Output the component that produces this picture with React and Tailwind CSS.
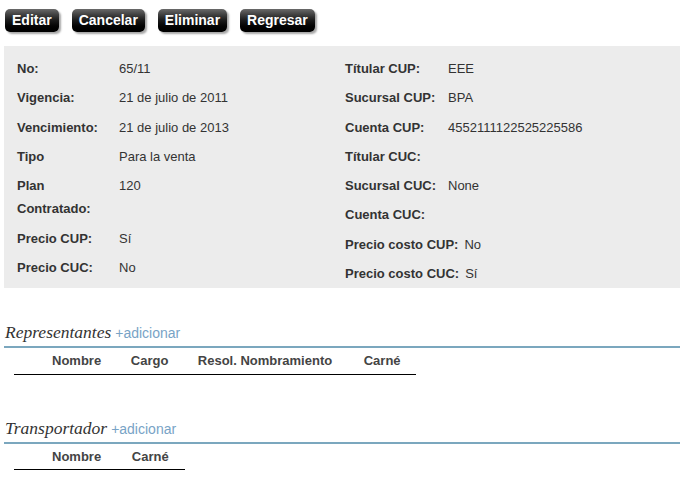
import React from 'react';

const left = [
  ['No:', '65/11'],
  ['Vigencia:', '21 de julio de 2011'],
  ['Vencimiento:', '21 de julio de 2013'],
  ['Tipo', 'Para la venta'],
  ['Plan Contratado:', '120'],
  ['Precio CUP:', 'Sí'],
  ['Precio CUC:', 'No'],
];

const right = [
  ['Títular CUP:', 'EEE'],
  ['Sucursal CUP:', 'BPA'],
  ['Cuenta CUP:', '4552111122525225586'],
  ['Títular CUC:', ''],
  ['Sucursal CUC:', 'None'],
  ['Cuenta CUC:', ''],
  ['Precio costo CUP:', 'No'],
  ['Precio costo CUC:', 'Sí'],
];

const Boton = ({ children }) => (
  <button className="h-[23px] px-[7px] rounded-[5px] bg-gradient-to-b from-[#6a6a6a] via-[#1a1a1a] to-black text-white font-bold text-[14px] leading-[23px] shadow-[2px_2px_2px_rgba(0,0,0,0.35)]">
    {children}
  </button>
);

const Seccion = ({ titulo, columnas, ancho }) => (
  <div>
    <div className="flex items-baseline gap-[4px] pl-[1px] border-b-2 border-[#7ba7be] pb-[2px] leading-[22px]">
      <span className="italic text-[17.5px] text-[#333] font-['Liberation_Serif',serif]">{titulo}</span>
      <span className="text-[14px] text-[#78a3c6]">+adicionar</span>
    </div>
    <table className="ml-[10px] border-collapse" style={{ width: ancho }}>
      <thead>
        <tr className="border-b border-black">
          <th className="w-[24px] p-0"></th>
          {columnas.map((c) => (
            <th key={c} className="px-[14px] h-[26px] text-left font-bold text-[13px] text-[#444] whitespace-nowrap">
              {c}
            </th>
          ))}
        </tr>
      </thead>
    </table>
  </div>
);

export default function App() {
  return (
    <div className="w-[687px] h-[482px] bg-white font-['Liberation_Sans',Arial,sans-serif] text-[#333] pt-[9px] pl-[4px] pr-[7px]">
      <div className="flex gap-[13px] pl-[1px]">
        <Boton>Editar</Boton>
        <Boton>Cancelar</Boton>
        <Boton>Eliminar</Boton>
        <Boton>Regresar</Boton>
      </div>

      <div className="mt-[14px] bg-[#ececec] grid grid-cols-[341px_1fr] pt-[8px] h-[242px]">
        <div className="pl-[13px]">
          {left.map(([k, v]) => (
            <div key={k} className="flex py-[3px] text-[13px] leading-[23.3px]">
              <div className="w-[102px] pr-[4px] font-bold shrink-0">{k}</div>
              <div>{v}</div>
            </div>
          ))}
        </div>
        <div>
          {right.map(([k, v]) => (
            <div key={k} className="flex py-[3px] text-[13px] leading-[23.3px]">
              <div className="min-w-[97px] mr-[6px] font-bold whitespace-nowrap">{k}</div>
              <div>{v}</div>
            </div>
          ))}
        </div>
      </div>

      <div className="mt-[33px]">
        <Seccion titulo="Representantes" columnas={['Nombre', 'Cargo', 'Resol. Nombramiento', 'Carné']} ancho="402px" />
      </div>
      <div className="mt-[42px]">
        <Seccion titulo="Transportador" columnas={['Nombre', 'Carné']} ancho="171px" />
      </div>
    </div>
  );
}
